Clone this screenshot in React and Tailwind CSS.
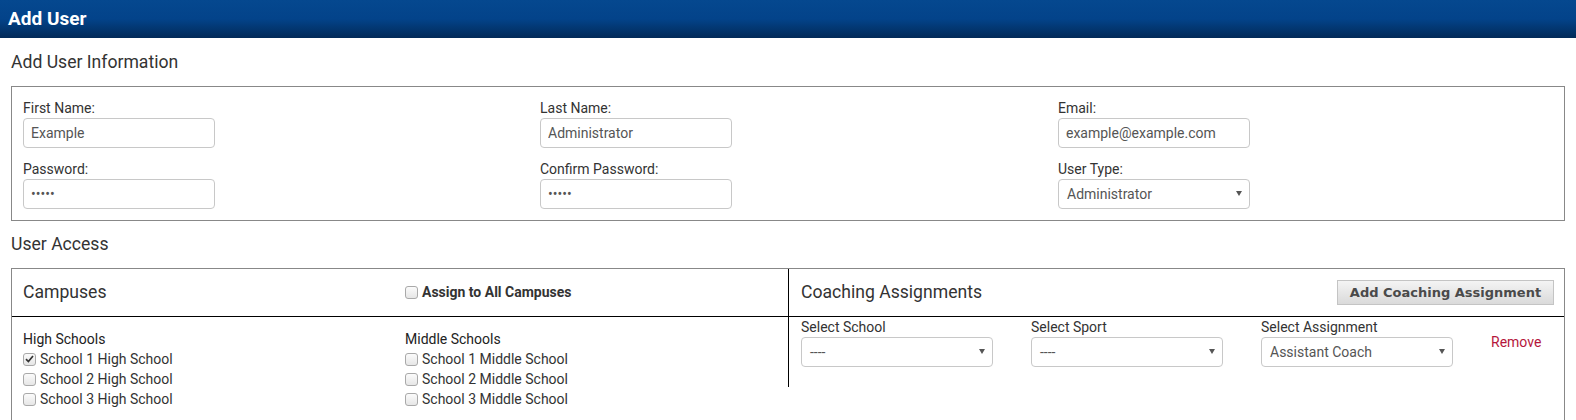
import React from "react";

const font = { fontFamily: "Roboto, 'Noto Sans', sans-serif" };

function Arrow() {
  return (
    <svg width="6" height="5" viewBox="0 0 6 5" className="absolute right-[7px] top-[11px]">
      <path d="M0 0 L6 0 L3 5 Z" fill="#555" />
    </svg>
  );
}

function TextInput({ value, type = "text" }) {
  return (
    <input
      type={type}
      defaultValue={value}
      readOnly
      className="w-[192px] h-[30px] border border-[#c8c8c8] rounded-[4px] px-[7px] text-[14px] text-[#555] outline-none bg-white"
      style={font}
    />
  );
}

function Select({ value }) {
  return (
    <div className="relative w-[192px] h-[30px] border border-[#c8c8c8] rounded-[4px] pl-[8px] text-[14px] text-[#555] flex items-center bg-white">
      <span>{value}</span>
      <Arrow />
    </div>
  );
}

function Field({ label, children }) {
  return (
    <div className="flex flex-col">
      <label className="text-[14px] leading-[20px] text-[#333]">{label}</label>
      {children}
    </div>
  );
}

function Box({ checked }) {
  return (
    <span className="w-[13px] h-[13px] mr-[4px] rounded-[3px] border border-[#a9a9a9] bg-gradient-to-b from-[#fbfbfb] to-[#e6e6e6] flex items-center justify-center shrink-0">
      {checked && (
        <svg width="9" height="8" viewBox="0 0 9 8">
          <path d="M1 4.2 L3.4 6.6 L8 1" fill="none" stroke="#333" strokeWidth="1.7" />
        </svg>
      )}
    </span>
  );
}

function Check({ label, checked, bold }) {
  return (
    <label className={`flex items-center h-[20px] text-[14px] text-[#333] ${bold ? "font-bold" : ""}`}>
      <Box checked={checked} />
      <span>{label}</span>
    </label>
  );
}

export default function App() {
  return (
    <div className="w-[1576px] h-[420px] overflow-hidden bg-white text-[#333]" style={font}>
      <div className="h-[38px] bg-gradient-to-b from-[#05488f] via-[#03438a] to-[#022a58] flex items-center pl-[8px]">
        <span className="text-white font-bold text-[19px]">Add User</span>
      </div>

      <div className="h-[48px] flex items-center pl-[11px] text-[17.6px] text-[#333]">Add User Information</div>

      <div className="ml-[11px] w-[1554px] border border-[#888] pl-[11px] pt-[11px] pb-[11px]">
        <div className="flex">
          <div className="w-[517px] flex flex-col gap-[11px]">
            <Field label="First Name:"><TextInput value="Example" /></Field>
            <Field label="Password:"><TextInput value="12345" type="password" /></Field>
          </div>
          <div className="w-[518px] flex flex-col gap-[11px]">
            <Field label="Last Name:"><TextInput value="Administrator" /></Field>
            <Field label="Confirm Password:"><TextInput value="12345" type="password" /></Field>
          </div>
          <div className="flex flex-col gap-[11px]">
            <Field label="Email:"><TextInput value="example@example.com" /></Field>
            <Field label="User Type:"><Select value="Administrator" /></Field>
          </div>
        </div>
      </div>

      <div className="h-[47px] flex items-center pl-[11px] text-[17.6px] text-[#333]">User Access</div>

      <div className="ml-[11px] w-[1554px] h-[200px] border border-[#888] flex items-start">
        <div className="w-[776px]">
          <div className="h-[48px] border-b border-black flex items-center pl-[11px]">
            <div className="w-[382px] text-[17.6px] text-[#333]">Campuses</div>
            <Check label="Assign to All Campuses" bold />
          </div>
          <div className="flex pl-[11px] pt-[13px]">
            <div className="w-[382px]">
              <div className="h-[19px] text-[14px] flex items-center text-[#222]">High Schools</div>
              <Check label="School 1 High School" checked />
              <Check label="School 2 High School" />
              <Check label="School 3 High School" />
            </div>
            <div>
              <div className="h-[19px] text-[14px] flex items-center text-[#222]">Middle Schools</div>
              <Check label="School 1 Middle School" />
              <Check label="School 2 Middle School" />
              <Check label="School 3 Middle School" />
            </div>
          </div>
        </div>
        <div className="flex-1 border-l border-black">
          <div className="h-[48px] border-b border-black flex items-center justify-between pl-[12px] pr-[10px]">
            <span className="text-[17.6px] text-[#333]">Coaching Assignments</span>
            <button
              className="h-[25px] w-[217px] border border-[#c4c4c4] bg-gradient-to-b from-[#f4f4f4] to-[#dadada] text-[13px] font-bold text-[#4a4a4a]"
              style={{ fontFamily: "'DejaVu Sans', Verdana, sans-serif" }}
            >
              Add Coaching Assignment
            </button>
          </div>
          <div className="flex pl-[12px] h-[70px]">
            <div className="w-[230px]"><Field label="Select School"><Select value="----" /></Field></div>
            <div className="w-[230px]"><Field label="Select Sport"><Select value="----" /></Field></div>
            <div className="w-[230px]"><Field label="Select Assignment"><Select value="Assistant Coach" /></Field></div>
            <div className="pt-[15px] text-[14px] leading-[20px] text-[#b5163c]">Remove</div>
          </div>
        </div>
      </div>
    </div>
  );
}
